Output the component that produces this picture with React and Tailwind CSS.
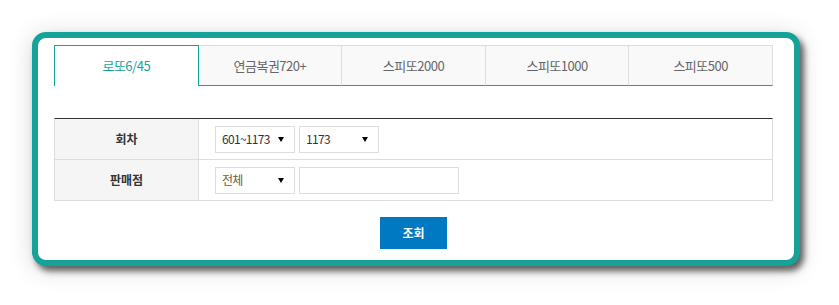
const tabs = ['로또6/45', '연금복권720+', '스피또2000', '스피또1000', '스피또500'];

const Select = ({ value, className = '' }) => (
    <div className={`flex items-center justify-between h-[27px] w-[80px] border border-[#dddddd] bg-white pl-[6px] pr-[10px] text-[12px] ${className}`}>
        <span className="tracking-[-0.7px]">{value}</span>
        <span className="w-0 h-0 border-l-[3.5px] border-r-[3.5px] border-t-[5px] border-l-transparent border-r-transparent border-t-black" />
    </div>
);

const App = () => {
    return (
        <div className="w-[839px] h-[305px] bg-white pt-[32px] pl-[32px]" style={{ fontFamily: '"Noto Sans CJK KR", "Noto Sans", sans-serif' }}>
            <div className="w-[768px] h-[234px] border-[6px] border-[#15a299] rounded-[14px] bg-white pt-[7px] pl-[16px] shadow-[4px_5px_6px_rgba(0,0,0,0.6),0_3px_24px_rgba(0,0,0,0.16)]">
                {/* Tabs */}
                <div className="flex w-[719px] h-[41px]">
                    {tabs.map((t, i) => (
                        <div
                            key={t}
                            className={`flex-1 flex items-center justify-center text-[13px] tracking-[-0.5px] ${i === 0
                                ? 'bg-white border-t border-l border-r border-[#15a299] text-[#15a299]'
                                : 'bg-[#f9f9f9] border-t border-r border-[#dddddd] border-b border-b-[#15a299] text-[#666666]'
                                }`}
                        >
                            {t}
                        </div>
                    ))}
                </div>

                {/* Search table */}
                <div className="w-[719px] mt-[32px] border-t border-t-[#333333] border-l border-r border-b border-[#dddddd] text-[#333333]">
                    <div className="flex h-[41px] border-b border-[#dddddd]">
                        <div className="w-[144px] bg-[#f5f5f5] border-r border-[#dddddd] flex items-center justify-center text-[12px] font-bold">회차</div>
                        <div className="flex items-center gap-[4px] pl-[16px]">
                            <Select value="601~1173" />
                            <Select value="1173" />
                        </div>
                    </div>
                    <div className="flex h-[40px]">
                        <div className="w-[144px] bg-[#f5f5f5] border-r border-[#dddddd] flex items-center justify-center text-[12px] font-bold">판매점</div>
                        <div className="flex items-center gap-[4px] pl-[16px]">
                            <Select value="전체" className="text-[#6b5a45]" />
                            <input className="h-[27px] w-[160px] border border-[#dddddd] bg-white outline-none" />
                        </div>
                    </div>
                </div>

                <div className="w-[719px] flex justify-center mt-[16px]">
                    <button className="w-[67px] h-[32px] bg-[#0079c2] text-white text-[12px] font-bold">조회</button>
                </div>
            </div>
        </div>
    );
};

export default App;
